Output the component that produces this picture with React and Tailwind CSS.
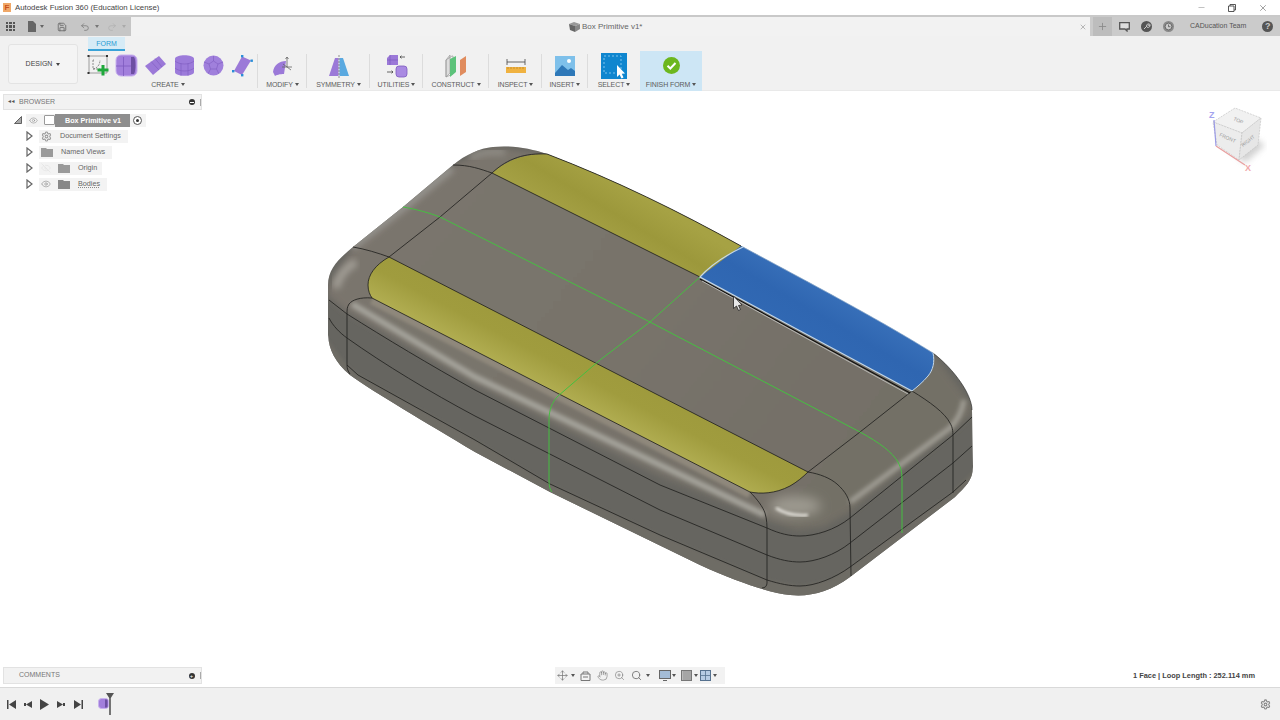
import React from "react";
import { X, Minus, Plus, Eye, EyeOff, Settings, Hand, ZoomIn, Search, Save, Undo2, Redo2, Move } from "lucide-react";

const Caret = ({ c = "border-t-[#555]" }) => (
  <span className={`block w-0 h-0 border-l-[2px] border-r-[2px] border-t-[3px] border-l-transparent border-r-transparent ${c}`} />
);

const Label = ({ children }) => (
  <div className="flex items-center gap-[2px] text-[7px] leading-[9px] text-[#5c5c5c] whitespace-nowrap tracking-[-0.1px]">
    {children}
    <Caret />
  </div>
);

const Group = ({ w, label, children, last, labelCls = "" }) => (
  <div className={`${w} h-[40px] flex flex-col items-center justify-between relative`}>
    <div className="h-[30px] flex items-center justify-center">{children}</div>
    <div className={`pb-[2px] ${labelCls}`}><Label>{label}</Label></div>
    {!last && <div className="absolute right-0 top-[3px] bottom-[3px] w-px bg-[#dcdcdc]" />}
  </div>
);

const Arrow = () => (
  <svg width="7" height="10" viewBox="0 0 7 10"><path d="M1 1 L6 5 L1 9 Z" fill="#fff" stroke="#666" strokeWidth="1.2" /></svg>
);

const Folder = ({ c = "#9a9a9a" }) => (
  <svg width="12" height="9" viewBox="0 0 12 9"><path d="M0 0 H5 L6 1 H12 V9 H0 Z" fill={c} /></svg>
);

const TreeRow = ({ w, icons, text, ml }) => (
  <div className="h-[16px] flex items-center pl-[26px]">
    <Arrow />
    <div className={`${w} ml-[6px] h-[13px] bg-[#f3f3f3] flex items-center pl-[2px]`}>
      {icons}
      <span className={`${ml} text-[7.2px] leading-[14px] text-[#666] whitespace-nowrap`}>{text}</span>
    </div>
  </div>
);

const Model = () => (
  <svg className="absolute inset-0" width="1280" height="596" viewBox="0 91 1280 596">
    <defs>
      <filter id="b1" x="-20%" y="-20%" width="140%" height="140%"><feGaussianBlur stdDeviation="1.4" /></filter>
      <filter id="b2" x="-20%" y="-20%" width="140%" height="140%"><feGaussianBlur stdDeviation="2" /></filter>
      <filter id="b3" x="-20%" y="-20%" width="140%" height="140%"><feGaussianBlur stdDeviation="3" /></filter>
      <filter id="b6" x="-50%" y="-50%" width="200%" height="200%"><feGaussianBlur stdDeviation="6" /></filter>
      <linearGradient id="ya" gradientUnits="userSpaceOnUse" x1="640" y1="195" x2="610" y2="245">
        <stop offset="0" stopColor="#a6a244" /><stop offset="0.5" stopColor="#9c983b" /><stop offset="1" stopColor="#a5a145" />
      </linearGradient>
      <linearGradient id="yb" gradientUnits="userSpaceOnUse" x1="520" y1="395" x2="558" y2="322">
        <stop offset="0" stopColor="#bcb95e" /><stop offset="0.55" stopColor="#a09c3e" /><stop offset="1" stopColor="#9d993c" />
      </linearGradient>
      <linearGradient id="bl" gradientUnits="userSpaceOnUse" x1="845" y1="290" x2="810" y2="350">
        <stop offset="0" stopColor="#3a72bb" /><stop offset="0.5" stopColor="#2f66b1" /><stop offset="1" stopColor="#3169b4" />
      </linearGradient>
      <linearGradient id="top" gradientUnits="userSpaceOnUse" x1="450" y1="170" x2="850" y2="480">
        <stop offset="0" stopColor="#7a756d" /><stop offset="0.5" stopColor="#78736b" /><stop offset="1" stopColor="#736f66" />
      </linearGradient>
      <clipPath id="body">
        <path d="M493 147 C510 145 530 148 547 154 C615 180 680 212 743 247 C810 283 880 320 933 353 C955 370 972 395 972 410 L973 467 C973 480 965 487 955 497 L850 577 C830 592 810 597 790 595 C770 593 740 583 700 565 L550 492 L475 452 C425 422 375 393 350 375 C335 362 329 350 328 335 L328 285 C328 268 340 258 353 247 L403 207 L453 165 C465 155 480 148 493 147 Z" />
      </clipPath>
    </defs>
    <g clipPath="url(#body)">
      <rect x="320" y="140" width="660" height="460" fill="#666560" />
      <path d="M347 365 L358 375 L475 440 L550 484 L660 535 L767 580 L800 586 L830 580 L850 567 L953 492 L975 470 L975 610 L320 610 L320 330 Z" fill="#6e6c65" filter="url(#b1)" />
      <path d="M493 147 L547 154 L743 247 L933 353 L972 405 L972 414 L953 430 L850 512 L823 527 L797 530 L767 520 L660 476 L475 385 L347 312 L328 296 L328 285 L353 247 L453 165 Z" fill="url(#top)" filter="url(#b3)" />
      <path d="M372 300 L750 494" stroke="#8f887c" strokeWidth="9" fill="none" filter="url(#b1)" />
      <path d="M352 304 L475 377 L660 465 L765 515" stroke="#a6a49c" strokeWidth="6" fill="none" filter="url(#b2)" />
      <path d="M352 247 L404 207 L452 168" stroke="#9a9893" strokeWidth="7" fill="none" filter="url(#b3)" />
      <path d="M336 288 C338 278 345 268 356 262" stroke="#a09c94" strokeWidth="8" fill="none" filter="url(#b3)" />
      <path d="M470 158 C480 152 490 151 505 152" stroke="#8f8c85" strokeWidth="7" fill="none" filter="url(#b3)" />
      <path d="M850 502 L950 428 C958 420 962 412 964 400" stroke="#a09e95" strokeWidth="5" fill="none" filter="url(#b2)" />
      <ellipse cx="795" cy="506" rx="26" ry="10" fill="#9d9a90" filter="url(#b6)" />
      <path d="M776 508 C785 514 797 516 808 515" stroke="#efede7" strokeWidth="2.6" fill="none" filter="url(#b1)" />
    </g>

    <path d="M492 173 C505 161 525 153 547 154 C615 180 680 212 741 246 L700 277 Z" fill="url(#ya)" />
    <path d="M389 257 C375 265 368 275 368 285 C368 291 370 295 372 298 L750 492 C760 494 775 494 790 486 C797 482 803 477 808 472 Z" fill="url(#yb)" />
    <path d="M741 246 C810 283 880 320 933 353 C935 362 933 370 928 376 C923 382 917 387 912 391 L700 277 Z" fill="url(#bl)" />

    <g fill="none" stroke="#222220" strokeWidth="0.85">
      <path d="M453 165 C470 165 480 169 492 173 L700 277" />
      <path d="M492 173 C508 158 525 153 547 154 C615 180 680 212 741 246" />
      <path d="M492 173 L440 217 L389 257" />
      <path d="M353 247 C365 249 378 253 389 257 L808 472" />
      <path d="M389 257 C375 265 368 275 368 285 C368 291 370 295 372 298 C360 297 352 300 349 304 C347 307 347 310 347 314 L347 365 C347 369 348 371 350 374" />
      <path d="M372 298 L750 492 C760 494 775 494 790 486 C797 482 803 477 808 472" />
      <path d="M912 391 L860 432 L808 472" />
      <path d="M912 391 C930 402 945 413 950 423 C953 428 953 432 953 440 L953 493" />
      <path d="M750 492 C757 499 763 507 765 513 C767 520 767 525 767 532 L767 583 C767 586 765 588 762 588" />
      <path d="M808 472 C820 474 830 478 837 484 C845 491 850 499 850 508 L851 576" />
      <path d="M329 300 L347 314 C385 338 430 365 475 390 L660 485 L767 528 C780 534 790 536 800 536 C815 536 835 530 850 518 L953 435 L972 417" />
      <path d="M329 318 C333 326 340 333 347 338 C385 365 430 392 475 416 L660 510 L767 555 C780 560 790 562 800 562 C815 562 835 555 850 543 L953 463 L972 446" />
      <path d="M347 365 L358 375 L475 440 L550 484 L660 535 L767 580 C780 584 790 586 800 586 C815 586 835 578 850 567 L953 492 L966 480" />
      <path d="M933 353 C955 370 972 395 972 410" strokeWidth="0.6" />
    </g>

    <g fill="none" stroke="#45c040" strokeWidth="1">
      <path d="M403 207 C415 209 430 213 440 217 L650 322 L860 432 C880 443 892 452 898 462 C901 468 902 472 902 480 L902 533" />
      <path d="M700 277 L650 322 L600 360 L558 396 C552 402 549 410 549 420 L549 480 C549 486 550 490 552 492" />
    </g>

    <path d="M743 247 C720 258 708 268 700 277 L912 391" fill="none" stroke="#c4d8ea" strokeWidth="1.2" />
    <path d="M933 353 C935 362 933 370 928 376 C923 382 917 387 912 391" fill="none" stroke="#c4d8ea" strokeWidth="1" />
    <path d="M743 247 C810 283 880 320 933 353" fill="none" stroke="#8fb0d4" strokeWidth="0.8" />
    <path d="M700 279 L910 393" fill="none" stroke="#0d0d0d" strokeWidth="1.1" />
    <path d="M702 281 L908 394" fill="none" stroke="#c9c9c6" strokeWidth="0.8" />
    <path d="M733.5 296 L733.5 308.5 L736.5 306 L738.5 310.5 L740.5 309.5 L738.5 305.5 L742 305 Z" fill="#e8e8e8" stroke="#222" strokeWidth="0.8" />
  </svg>
);

const ViewCube = () => (
  <svg className="absolute left-[1205px] top-[14px]" width="62" height="72" viewBox="0 0 62 72">
    <defs>
      <filter id="cs" x="-30%" y="-30%" width="160%" height="160%"><feGaussianBlur stdDeviation="3" /></filter>
    </defs>
    <path d="M14 34 L40 58 L60 40 L40 28 Z" fill="#bdbdbd" opacity="0.7" filter="url(#cs)" />
    <path d="M8 17 L30 3 L56 13 L37 28 Z" fill="#f1f1f1" stroke="#c4c4c4" strokeWidth="0.7" strokeDasharray="2 1" />
    <path d="M8 17 L37 28 L34 55 L12 40 Z" fill="#ececec" stroke="#c4c4c4" strokeWidth="0.7" strokeDasharray="2 1" />
    <path d="M37 28 L56 13 L53 40 L34 55 Z" fill="#e6e6e6" stroke="#c4c4c4" strokeWidth="0.7" strokeDasharray="2 1" />
    <path d="M9 15 L11 41" stroke="#9a9ae6" strokeWidth="1.2" />
    <path d="M11 41 L40 60" stroke="#e8a0a0" strokeWidth="1.4" />
    <text x="4" y="13" fontSize="9" fontWeight="bold" fontFamily="Liberation Sans" fill="#a3a3ee">Z</text>
    <text x="40" y="66" fontSize="9" fontWeight="bold" fontFamily="Liberation Sans" fill="#f0a8a8">X</text>
    <text x="0" y="0" fontSize="5" fontFamily="Liberation Sans" fill="#999" transform="translate(28 15) rotate(24)">TOP</text>
    <text x="0" y="0" fontSize="5" fontFamily="Liberation Sans" fill="#999" transform="translate(14 31) rotate(24)">FRONT</text>
    <text x="0" y="0" fontSize="5" fontFamily="Liberation Sans" fill="#999" transform="translate(38 42) rotate(-38)">RIGHT</text>
  </svg>
);

const Purple = ({ children, w = 24, h = 24, vb = "0 0 24 24" }) => (
  <svg width={w} height={h} viewBox={vb}>{children}</svg>
);

export default function App() {
  return (
    <div className="w-[1280px] h-[720px] flex flex-col overflow-hidden bg-white font-['Liberation_Sans',Arial,sans-serif]">
      {/* Title bar */}
      <div className="h-[15px] flex items-center bg-white">
        <div className="ml-[3px] w-[8px] h-[9px] bg-[#f0a868] flex items-center justify-center text-[8px] leading-none font-bold text-[#c8501c]">F</div>
        <span className="ml-[4px] text-[7.8px] text-[#444] whitespace-nowrap">Autodesk Fusion 360 (Education License)</span>
        <div className="ml-auto flex items-center">
          <Minus size={9} strokeWidth={1.2} className="text-[#777] mr-[22px]" />
          <svg width="8" height="8" viewBox="0 0 8 8" className="mr-[22px]"><path d="M0.5 2 H6 V7.5 H0.5 Z M2 2 V0.5 H7.5 V6 H6" fill="none" stroke="#444" strokeWidth="0.9" /></svg>
          <X size={10} strokeWidth={1.1} className="text-[#333] mr-[12px]" />
        </div>
      </div>

      {/* Tab row */}
      <div className="h-[21px] flex border-t-2 border-[#c9c9c9] bg-[#cbcbcb]">
        <div className="w-[131px] bg-[#c6c6c6] flex items-center text-[#666]">
          <div className="ml-[6px] w-[9px] h-[9px] grid grid-cols-3 gap-px">
            {[0, 1, 2, 3, 4, 5, 6, 7, 8].map((i) => <span key={i} className="bg-[#555]" />)}
          </div>
          <svg width="8" height="11" viewBox="0 0 8 11" className="ml-[13px]"><path d="M0 0 H5 L8 3 V11 H0 Z" fill="#666" /></svg>
          <span className="ml-[4px]"><Caret c="border-t-[#666]" /></span>
          <Save size={10} strokeWidth={2} className="ml-[13px] text-[#666]" />
          <Undo2 size={10} strokeWidth={1.8} className="ml-[13px] text-[#777]" />
          <span className="ml-[5px]"><Caret c="border-t-[#777]" /></span>
          <Redo2 size={10} strokeWidth={1.4} className="ml-[8px] text-[#aaa]" />
          <span className="ml-[5px]"><Caret c="border-t-[#aaa]" /></span>
        </div>
        <div className="w-[959px] bg-[#f2f2f2] flex items-center relative">
          <div className="ml-[438px] flex items-center">
            <svg width="11" height="10" viewBox="0 0 11 10"><path d="M0 2 L5 0 L11 2 L6 4 Z" fill="#999" /><path d="M0 2 L6 4 V10 L1 8 Z" fill="#666" /><path d="M6 4 L11 2 V7 L6 10 Z" fill="#888" /></svg>
            <span className="ml-[2px] text-[8px] text-[#666] whitespace-nowrap">Box Primitive v1*</span>
          </div>
          <X size={8} strokeWidth={1.3} className="absolute left-[948px] top-[6px] text-[#666]" />
        </div>
        <div className="flex-1 flex items-center">
          <div className="ml-[3px] w-[19px] h-[19px] bg-[#bdbdbd] flex items-center justify-center">
            <Plus size={11} strokeWidth={1.8} className="text-[#888]" />
          </div>
          <svg width="11" height="10" viewBox="0 0 11 10" className="ml-[7px]"><path d="M0.7 0.7 H10.3 V7 H8 V9 L6 7 H0.7 Z" fill="#ddd" stroke="#555" strokeWidth="1.3" /></svg>
          <svg width="11" height="11" viewBox="0 0 11 11" className="ml-[10.5px]"><circle cx="5.5" cy="5.5" r="5.5" fill="#555" /><path d="M3 8 L6 5 M5.5 5.5 C5 3.5 7 2.5 8.5 3 L7.2 4.4 L7.8 5 L9 3.7 C9.5 5.5 8 7 6 6.2" stroke="#cbcbcb" strokeWidth="1" fill="none" /></svg>
          <svg width="11" height="11" viewBox="0 0 11 11" className="ml-[11px]"><circle cx="5.5" cy="5.5" r="5.5" fill="#8a8a8a" /><circle cx="5.5" cy="5.5" r="3.4" fill="#cbcbcb" stroke="#555" strokeWidth="0.8" /><path d="M5.5 3.5 V5.7 H7.4" stroke="#555" strokeWidth="0.8" fill="none" /></svg>
          <span className="ml-[16.5px] text-[7px] text-[#555] whitespace-nowrap">CADucation Team</span>
          <div className="ml-[16px] w-[11px] h-[11px] rounded-full bg-[#555] flex items-center justify-center text-[9px] leading-none font-bold text-[#cbcbcb]">?</div>
        </div>
      </div>

      {/* Toolbar */}
      <div className="h-[55px] bg-[#f1f1f1] border-b border-[#e9e9e9] flex relative">
        <div className="ml-[8px] mt-[8px] w-[70px] h-[40px] bg-[#f4f4f4] border border-[#e3e3e3] rounded-[3px] flex items-center justify-center gap-[4px] text-[7px] text-[#444]">
          DESIGN <Caret c="border-t-[#444]" />
        </div>
        <div className="ml-[10px] w-[170px] relative flex items-end mt-[1px]">
          <div className="absolute left-0 top-0 w-[37px] h-[14px] bg-[#d6ebf6] border-b-2 border-[#3aa3d8] text-[7px] leading-[13px] text-center text-[#2a9bd4]">FORM</div>
        </div>
        <div className="absolute left-[86px] top-[15px] flex">
          <Group w="w-[172px]" label="CREATE" labelCls="mr-[8px]">
            <div className="flex items-center gap-[6px] mr-[5px]">
              <Purple w={23} h={23} vb="0 0 23 23">
                <path d="M3 2 H21 V19 H3 Z" fill="none" stroke="#888" strokeWidth="0.8" />
                <path d="M1.5 1 h2 v2 h-2 Z M20 1 h2 v2 h-2 Z M1.5 18 h2 v2 h-2 Z" fill="#333" />
                <path d="M7 6 V15 H14 M7 6 H8 M7 15 C12 14 14 10 14 6" fill="none" stroke="#777" strokeWidth="0.8" strokeDasharray="2 1" />
                <path d="M15.5 11 H18.5 V14.5 H22.5 V17.5 H18.5 V21.5 H15.5 V17.5 H11.5 V14.5 H15.5 Z" fill="#1fa83b" />
              </Purple>
              <Purple w={23} h={23} vb="0 0 23 23">
                <rect x="1" y="1" width="21" height="21" rx="5" fill="#a27fdc" stroke="#c8b2ee" />
                <path d="M16 3 H19 C21 5 21 17 19 20 H16 Z" fill="#6d4fa3" />
                <path d="M8.5 3 V22 M1 12 H16" stroke="#7d5bbf" strokeWidth="0.8" />
              </Purple>
              <Purple w={23} h={23} vb="0 0 23 23">
                <path d="M1 12 L15 2 L22 10 L9 21 Z" fill="#9b79d8" />
                <path d="M7 7.5 L15 16 M11 4.5 L18 13" stroke="#7d5bbf" strokeWidth="0.6" />
              </Purple>
              <Purple w={23} h={23} vb="0 0 23 23">
                <path d="M2 5 C2 0 21 0 21 5 V18 C21 23 2 23 2 18 Z" fill="#9c7bda" />
                <path d="M2 7 C6 11 17 11 21 7 M2 14 C6 18 17 18 21 14 M8 9 V22 M15 9 V22" stroke="#7d5bbf" strokeWidth="0.6" fill="none" />
              </Purple>
              <Purple w={23} h={23} vb="0 0 23 23">
                <circle cx="11.5" cy="11.5" r="10" fill="#a080dc" />
                <path d="M11.5 7 L16 10 L14.5 15 H8.5 L7 10 Z M11.5 7 V2 M16 10 L21 8 M14.5 15 L17 20 M8.5 15 L6 20 M7 10 L2 8" stroke="#7d5bbf" strokeWidth="0.6" fill="none" />
              </Purple>
              <Purple w={23} h={23} vb="0 0 23 23">
                <path d="M3 17 L11 2.5 L20 6.5 L11 21 Z" fill="#9b79d8" />
                <rect x="1" y="16" width="2.4" height="2.4" fill="#2a8fd8" /><rect x="10" y="1" width="2.4" height="2.4" fill="#2a8fd8" /><rect x="19.5" y="5.5" width="2.4" height="2.4" fill="#2a8fd8" /><rect x="10" y="20" width="2.4" height="2.4" fill="#2a8fd8" />
              </Purple>
            </div>
          </Group>
          <Group w="w-[49px]" label="MODIFY">
            <Purple w={22} h={22} vb="0 0 22 22">
              <path d="M1 17 C2 10 7 6 14 6 L12 19 C8 19 4 20 3 21 Z" fill="#9b79d8" />
              <path d="M15 2 V12 M10 12 H20 M15 2 L13.5 4 M15 2 L16.5 4 M11 9 L19 15" stroke="#666" strokeWidth="0.8" fill="none" />
            </Purple>
          </Group>
          <Group w="w-[63px]" label="SYMMETRY">
            <Purple w={22} h={24} vb="0 0 22 24">
              <path d="M1 22 L7 4 H10.5 V22 Z" fill="#9b79d8" />
              <path d="M11.5 4 H15 L21 22 H11.5 Z" fill="#5aa9e0" />
              <path d="M11 1 V24" stroke="#666" strokeWidth="0.7" strokeDasharray="2 1" />
            </Purple>
          </Group>
          <Group w="w-[53px]" label="UTILITIES">
            <Purple w={22} h={24} vb="0 0 22 24">
              <path d="M1 4 L4 1 H12 V11 H1 Z" fill="#9b79d8" />
              <path d="M4 1 V11 M1 6 H12" stroke="#7d5bbf" strokeWidth="0.7" />
              <rect x="10" y="12" width="11" height="11" rx="3" fill="#a98ae2" stroke="#7d5bbf" strokeWidth="0.8" />
              <path d="M14 3 H19 M14 3 L15.5 1.7 M14 3 L15.5 4.3 M1 18 H7 M7 18 L5.5 16.7 M7 18 L5.5 19.3" stroke="#444" strokeWidth="0.8" fill="none" />
            </Purple>
          </Group>
          <Group w="w-[66px]" label="CONSTRUCT">
            <Purple w={22} h={24} vb="0 0 22 24">
              <path d="M1 6 L5 1 V19 L1 23 Z" fill="#ddd" stroke="#999" strokeWidth="0.7" />
              <path d="M1 6 L7 2 H8 V20 L1 23 Z" fill="none" stroke="#999" strokeWidth="0.7" />
              <path d="M5 5 L11 2 V18 L5 23 Z" fill="#5cc27a" />
              <path d="M15 6 L21 2 V18 L15 22 Z" fill="#e08c5e" />
            </Purple>
          </Group>
          <Group w="w-[53px]" label="INSPECT">
            <Purple w={22} h={20} vb="0 0 22 20">
              <path d="M2 3 V9 M20 3 V9 M2 6 H20" stroke="#444" strokeWidth="0.8" />
              <rect x="1" y="11" width="20" height="6" fill="#f0b240" />
              <path d="M3 11 V13 M6 11 V13 M9 11 V13 M12 11 V13 M15 11 V13 M18 11 V13" stroke="#b37a1c" strokeWidth="0.6" />
            </Purple>
          </Group>
          <Group w="w-[46px]" label="INSERT">
            <Purple w={20} h={20} vb="0 0 20 20">
              <rect width="20" height="20" fill="#7ec0ea" />
              <circle cx="14" cy="5" r="2" fill="#fff" />
              <path d="M0 17 L7 9 L13 14 L16 12 L20 15 V20 H0 Z" fill="#2e78b8" />
            </Purple>
          </Group>
          <Group w="w-[52px]" label="SELECT" last>
            <Purple w={26} h={26} vb="0 0 26 26">
              <rect width="26" height="26" fill="#0f86cf" />
              <rect x="3" y="3" width="17" height="17" fill="none" stroke="#7fc4ee" strokeWidth="1" strokeDasharray="2 2" />
              <path d="M16 12 V24 L18.6 21.5 L20.5 25.5 L22.5 24.5 L20.8 20.7 L24 20.5 Z" fill="#fff" />
            </Purple>
          </Group>
          <div className="w-[62px] h-[40px] bg-[#cde6f5] flex flex-col items-center justify-between">
            <div className="h-[30px] flex items-center justify-center">
              <svg width="17" height="17" viewBox="0 0 17 17"><circle cx="8.5" cy="8.5" r="8.5" fill="#6cb71e" /><path d="M4.5 8.8 L7.3 11.5 L12.5 6" fill="none" stroke="#fff" strokeWidth="2" /></svg>
            </div>
            <div className="pb-[2px]"><Label>FINISH FORM</Label></div>
          </div>
        </div>
      </div>

      {/* Canvas */}
      <div className="flex-1 relative bg-white flex flex-col justify-between">
        <Model />
        <ViewCube />

        <div className="relative ml-[3px] mt-[3px] w-[199px]">
          <div className="h-[16px] bg-[#f2f2f2] border border-[#e2e2e2] flex items-center text-[7px] text-[#777]">
            <span className="ml-[3px] w-[9px] text-[5px] text-[#555] tracking-[-1.5px]">◄◄</span>
            <span className="ml-[3px]">BROWSER</span>
            <span className="ml-auto w-[6px] h-[6px] rounded-full bg-[#333] flex items-center justify-center"><span className="w-[4px] h-px bg-white" /></span>
            <span className="ml-[5.5px] w-px h-[7px] bg-[#aaa]" />
          </div>
        </div>

        <div className="absolute left-0 top-[21px] w-[202px]">
          <div className="h-[16px] flex items-center pl-[14px]">
            <svg width="8" height="8" viewBox="0 0 8 8"><path d="M7.5 0.5 V7.5 H0.5 Z" fill="#aaa" stroke="#444" strokeWidth="0.8" /></svg>
            <div className="ml-[4px] h-[13px] w-[120px] bg-[#f3f3f3] flex items-center">
              <Eye size={9} strokeWidth={1.4} className="ml-[3px] text-[#888]" />
              <span className="ml-[6px] w-[11px] h-[10px] bg-white border border-[#999] rounded-[1px]" />
              <span className="w-[75px] h-[13px] bg-[#8e8e8e] text-white font-bold text-[7.2px] leading-[13px] pl-[10px] whitespace-nowrap">Box Primitive v1</span>
              <span className="ml-[3px] w-[9px] h-[9px] rounded-full border border-[#555] bg-white flex items-center justify-center"><span className="w-[3px] h-[3px] rounded-full bg-[#333]" /></span>
            </div>
          </div>
          <TreeRow w="w-[89px]" ml="ml-[8px]" text="Document Settings" icons={<Settings size={11} strokeWidth={2.2} className="text-[#999]" />} />
          <TreeRow w="w-[73px]" ml="ml-[8px]" text="Named Views" icons={<Folder />} />
          <TreeRow w="w-[63px]" ml="ml-[8px]" text="Origin" icons={<><EyeOff size={10} strokeWidth={1.2} className="text-[#ddd]" /><span className="ml-[7px]"><Folder /></span></>} />
          <TreeRow w="w-[68px]" ml="ml-[8px] underline decoration-dotted decoration-[#888]" text="Bodies" icons={<><Eye size={10} strokeWidth={1.4} className="text-[#888]" /><span className="ml-[7px]"><Folder c="#888" /></span></>} />
        </div>

        <div className="relative flex items-center mb-[3px] h-[17px]">
          <div className="ml-[3px] w-[199px] h-[17px] bg-[#f2f2f2] border border-[#e2e2e2] flex items-center text-[7px] text-[#777]">
            <span className="ml-[15px]">COMMENTS</span>
            <span className="ml-auto w-[6px] h-[6px] rounded-full bg-[#333] flex items-center justify-center text-[6px] leading-none text-white">+</span>
            <span className="ml-[5.5px] w-px h-[7px] bg-[#aaa]" />
          </div>
          <div className="ml-[353px] w-[170px] h-[17px] bg-[#f2f2f2] flex items-center text-[#777]">
            <Move size={11} strokeWidth={1.6} className="ml-[2px]" />
            <span className="ml-[3px]"><Caret /></span>
            <svg width="11" height="10" viewBox="0 0 11 10" className="ml-[5px]"><path d="M1 3 H10 V9.5 H1 Z M3 3 V1 H8 V3 M3 6 H8" fill="none" stroke="#777" strokeWidth="1" /></svg>
            <Hand size={11} strokeWidth={1.3} className="ml-[6px]" />
            <ZoomIn size={11} strokeWidth={1.3} className="ml-[6px]" />
            <Search size={11} strokeWidth={2} className="ml-[6px]" />
            <span className="ml-[4px]"><Caret /></span>
            <svg width="12" height="11" viewBox="0 0 12 11" className="ml-[9px]"><rect x="0.5" y="0.5" width="11" height="8" fill="#a4bcd6" stroke="#666" /><path d="M4 10.5 H8" stroke="#666" /></svg>
            <span className="ml-[1px]"><Caret /></span>
            <svg width="11" height="11" viewBox="0 0 11 11" className="ml-[5px]"><rect x="0.5" y="0.5" width="10" height="10" fill="#bbb" stroke="#777" /><path d="M3 1 V10 M5 1 V10 M7 1 V10 M9 1 V10" stroke="#777" strokeWidth="0.6" /></svg>
            <span className="ml-[2px]"><Caret /></span>
            <svg width="11" height="11" viewBox="0 0 11 11" className="ml-[2px]"><rect x="0.5" y="0.5" width="10" height="10" fill="#b6cbe4" stroke="#56718f" /><path d="M5.5 1 V10 M1 5.5 H10" stroke="#56718f" strokeWidth="0.8" /></svg>
            <span className="ml-[2px]"><Caret /></span>
          </div>
          <div className="ml-auto mr-[25px] text-[7.4px] font-bold text-[#444] whitespace-nowrap">1 Face | Loop Length : 252.114 mm</div>
        </div>
      </div>

      {/* Timeline */}
      <div className="h-[33px] bg-[#f0f0f0] border-t border-[#d9d9d9] flex items-center text-[#444]">
        <svg width="9" height="9" viewBox="0 0 9 9" className="ml-[7px]"><path d="M0 0 H1.5 V9 H0 Z M9 0 V9 L2 4.5 Z" fill="#444" /></svg>
        <svg width="8" height="9" viewBox="0 0 8 9" className="ml-[8px]"><path d="M8 1 V8 L2 4.5 Z" fill="#444" /><rect x="0" y="3" width="2" height="3" fill="#444" /></svg>
        <svg width="9" height="11" viewBox="0 0 9 11" className="ml-[7.5px]"><path d="M0 0 L9 5.5 L0 11 Z" fill="#444" /></svg>
        <svg width="8" height="9" viewBox="0 0 8 9" className="ml-[8.5px]"><path d="M0 1 V8 L6 4.5 Z" fill="#444" /><rect x="6" y="3" width="2" height="3" fill="#444" /></svg>
        <svg width="9" height="9" viewBox="0 0 9 9" className="ml-[8.5px]"><path d="M9 0 H7.5 V9 H9 Z M0 0 V9 L7 4.5 Z" fill="#444" /></svg>
        <div className="ml-[15px] relative w-[18px] h-[24px]">
          <svg width="11" height="11" viewBox="0 0 11 11" className="absolute left-0 top-[6px]"><rect x="0.5" y="0.5" width="10" height="10" rx="3" fill="#a27fdc" stroke="#c8b2ee" /><path d="M7 1.5 H9.5 V9.5 H7 Z" fill="#6d4fa3" /></svg>
          <svg width="8" height="22" viewBox="0 0 8 22" className="absolute left-[8.5px] top-[1px]"><path d="M0 0 H8 L4.8 5 V22 H3.2 V5 Z" fill="#555" /></svg>
        </div>
        <Settings size={11} strokeWidth={2.4} className="ml-auto mr-[9px] text-[#888]" />
      </div>
    </div>
  );
}
